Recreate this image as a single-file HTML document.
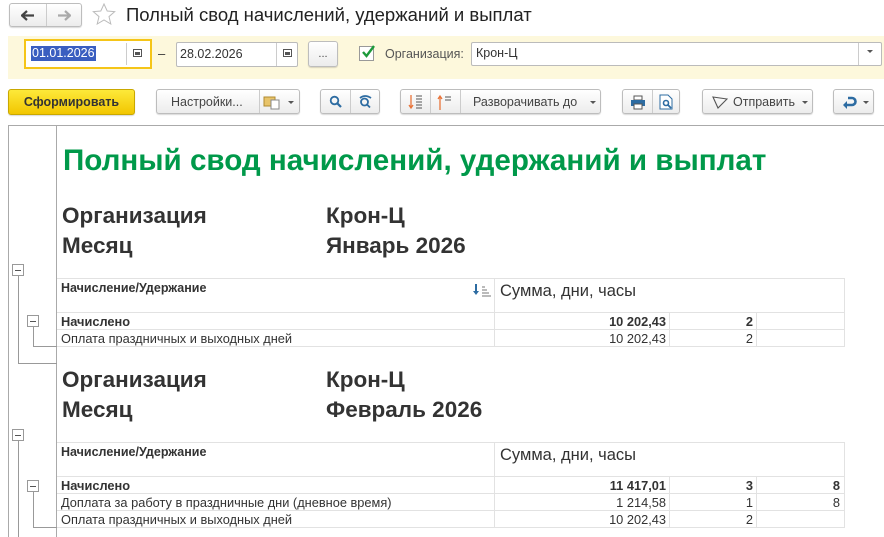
<!DOCTYPE html>
<html><head><meta charset="utf-8"><style>
*{box-sizing:border-box;margin:0;padding:0}
body{width:884px;height:537px;overflow:hidden;background:#fff;font-family:"Liberation Sans",Arial,sans-serif;color:#333;position:relative;font-size:12px}
.a{position:absolute}
.btn{position:absolute;height:25px;border:1px solid #bdbdbd;border-radius:3px;background:linear-gradient(#fff,#ececec);box-shadow:0 1px 1px rgba(0,0,0,.15);font-size:12.5px;color:#444;display:flex;align-items:center}
.sep{position:absolute;top:0;bottom:0;width:1px;background:#ccc}
.caret{width:0;height:0;border-left:3px solid transparent;border-right:3px solid transparent;border-top:3px solid #555;display:inline-block}
.hl{position:absolute;background:#e2e2e2;height:1px}
.vl{position:absolute;background:#e2e2e2;width:1px}
.t{position:absolute;font-size:12.8px;white-space:nowrap}
.b{font-weight:bold}
.r{text-align:right}
.box{position:absolute;width:12px;height:12px;border:1px solid #999;background:#fff}
.box:after{content:"";position:absolute;left:2px;right:2px;top:5px;height:1px;background:#555}
.tl{position:absolute;background:#999}
.big{position:absolute;font-size:22.5px;font-weight:bold;color:#333}
</style></head><body>
<div class="btn" style="left:9px;top:3px;width:73px;height:24px"><div class="sep" style="left:36px"></div>
<svg class="a" style="left:11px;top:6px" width="14" height="11"><path d="M1 5.5h12M6 1L1 5.5 6 10" stroke="#444" stroke-width="2.2" fill="none"/></svg>
<svg class="a" style="left:47px;top:6px" width="14" height="11"><path d="M1 5.5h12M8 1l5 4.5L8 10" stroke="#aaa" stroke-width="2.2" fill="none"/></svg></div>
<svg class="a" style="left:92px;top:3px" width="24" height="22"><path d="M12 1l3.2 7 7.5.6-5.7 5 1.8 7.4L12 17l-6.8 4 1.8-7.4-5.7-5 7.5-.6z" fill="none" stroke="#bbb" stroke-width="1"/></svg>
<div class="a" style="left:126px;top:4px;font-size:18.5px;color:#222">Полный свод начислений, удержаний и выплат</div>
<div class="a" style="left:8px;top:36px;width:876px;height:43px;background:#fdf8dc"></div>
<div class="a" style="left:24px;top:39px;width:128px;height:30px;border:2px solid #f5c518;background:#fff"></div>
<div class="a" style="left:28px;top:43px;width:99px;height:22px;border-right:1px solid #ccc"></div>
<div class="a" style="left:31px;top:46px;background:#3a5ec0;color:#fff;font-size:12.5px;padding:0 1px;line-height:15px">01.01.2026</div>
<svg class="a" style="left:133px;top:48px" width="9" height="9"><rect x=".5" y="1.5" width="8" height="7" fill="none" stroke="#555"/><rect x="2" y="4" width="5" height="3" fill="#555"/></svg>
<div class="a" style="left:158px;top:46px;font-size:13px">–</div>
<div class="a" style="left:176px;top:42px;width:122px;height:25px;border:1px solid #bbb;background:#fff;border-radius:2px"></div>
<div class="a" style="left:276px;top:43px;width:1px;height:23px;background:#ccc"></div>
<div class="a" style="left:180px;top:47px;font-size:12.5px">28.02.2026</div>
<svg class="a" style="left:283px;top:48px" width="9" height="9"><rect x=".5" y="1.5" width="8" height="7" fill="none" stroke="#555"/><rect x="2" y="4" width="5" height="3" fill="#555"/></svg>
<div class="btn" style="left:308px;top:41px;width:30px;height:26px;justify-content:center;font-size:11px">...</div>
<div class="a" style="left:359px;top:46px;width:15px;height:15px;border:1px solid #999;background:#fff"></div>
<svg class="a" style="left:360px;top:44px" width="16" height="16"><path d="M3 8l3.5 4L14 2" stroke="#1d9a3a" stroke-width="2.4" fill="none"/></svg>
<div class="a" style="left:385px;top:47px;font-size:12.5px;color:#555">Организация:</div>
<div class="a" style="left:471px;top:42px;width:411px;height:24px;border:1px solid #bbb;background:#fff;border-radius:2px"></div>
<div class="a" style="left:858px;top:43px;width:1px;height:22px;background:#ccc"></div>
<div class="a" style="left:867px;top:49px;line-height:0"><span class="caret"></span></div>
<div class="a" style="left:476px;top:46px;font-size:12.5px">Крон-Ц</div>
<div class="btn" style="left:8px;top:89px;width:127px;height:26px;background:linear-gradient(#fde93a,#f2c600);border-color:#c9a800;justify-content:center;font-weight:bold;font-size:12.5px;color:#333">Сформировать</div>
<div class="btn" style="left:156px;top:89px;width:144px"><span style="margin-left:14px">Настройки...</span><div class="sep" style="left:102px"></div>
<svg class="a" style="left:106px;top:4px" width="20" height="16"><rect x="1" y="3" width="11" height="9" fill="#e8c46a" stroke="#b08a30"/><rect x="8" y="6" width="8" height="9" fill="#fff" stroke="#888"/></svg><span class="caret a" style="left:131px;top:11px"></span></div>
<div class="btn" style="left:320px;top:89px;width:60px"><div class="sep" style="left:29px"></div>
<svg class="a" style="left:8px;top:5px" width="14" height="14"><circle cx="5.5" cy="5.5" r="3.8" fill="none" stroke="#2d6ca2" stroke-width="1.8"/><path d="M8.3 8.3L12 12" stroke="#2d6ca2" stroke-width="2.2"/></svg>
<svg class="a" style="left:37px;top:4px" width="16" height="15"><circle cx="6.5" cy="8" r="3.5" fill="none" stroke="#2d6ca2" stroke-width="1.8"/><path d="M9 10.5l3 3M2 4q5-4 11 0" stroke="#2d6ca2" stroke-width="1.8" fill="none"/></svg></div>
<div class="btn" style="left:400px;top:89px;width:201px"><div class="sep" style="left:29px"></div><div class="sep" style="left:59px"></div>
<svg class="a" style="left:7px;top:4px" width="16" height="17"><path d="M3 1v13M1 11l2 3 2-3" stroke="#e8743a" stroke-width="1.3" fill="none"/><path d="M8 2h6M8 5h6M8 8h6M8 11h6M8 14h6" stroke="#555"/></svg>
<svg class="a" style="left:36px;top:4px" width="16" height="17"><path d="M3 3v13M1 5l2-3 2 3" stroke="#e8743a" stroke-width="1.3" fill="none"/><path d="M8 3h6M8 6h6" stroke="#555"/></svg>
<span class="a" style="left:72px;top:5px">Разворачивать до</span><span class="caret a" style="left:189px;top:11px"></span></div>
<div class="btn" style="left:622px;top:89px;width:58px"><div class="sep" style="left:29px"></div>
<svg class="a" style="left:7px;top:5px" width="16" height="15"><rect x="4" y="1" width="8" height="4" fill="#fff" stroke="#555"/><rect x="1" y="5" width="14" height="6" fill="#2d6ca2"/><rect x="4" y="9" width="8" height="5" fill="#fff" stroke="#555"/></svg>
<svg class="a" style="left:36px;top:4px" width="15" height="16"><path d="M1 1h8l4 4v10H1z" fill="#fff" stroke="#2d6ca2"/><circle cx="7" cy="9" r="2.5" fill="none" stroke="#2d6ca2" stroke-width="1.6"/><path d="M9 11l3 3" stroke="#2d6ca2" stroke-width="1.8"/></svg></div>
<div class="btn" style="left:702px;top:89px;width:111px"><svg class="a" style="left:9px;top:5px" width="16" height="15"><path d="M1 2l14 2-9 9z" fill="none" stroke="#555" stroke-width="1.1"/></svg><span class="a" style="left:30px;top:5px">Отправить</span><span class="caret a" style="left:99px;top:11px"></span></div>
<div class="btn" style="left:833px;top:89px;width:41px"><svg class="a" style="left:8px;top:5px" width="16" height="14"><path d="M6 3h4a3.5 3.5 0 010 7H3" stroke="#2d6ca2" stroke-width="2.6" fill="none"/><path d="M5 6L1 10l4 4z" fill="#2d6ca2"/></svg><span class="caret a" style="left:29px;top:11px"></span></div>
<div class="a" style="left:8px;top:125px;width:876px;height:1px;background:#aaa"></div>
<div class="a" style="left:8px;top:125px;width:1px;height:412px;background:#aaa"></div>
<div class="a" style="left:56px;top:125px;width:1px;height:412px;background:#aaa"></div>
<div class="a" style="left:63px;top:144px;font-size:29.6px;font-weight:bold;color:#00994a;white-space:nowrap">Полный свод начислений, удержаний и выплат</div>
<div class="big" style="left:62px;top:203px">Организация</div><div class="big" style="left:326px;top:203px">Крон-Ц</div>
<div class="big" style="left:62px;top:233px">Месяц</div><div class="big" style="left:326px;top:233px">Январь 2026</div>
<div class="big" style="left:62px;top:367px">Организация</div><div class="big" style="left:326px;top:367px">Крон-Ц</div>
<div class="big" style="left:62px;top:397px">Месяц</div><div class="big" style="left:326px;top:397px">Февраль 2026</div>
<div class="hl" style="left:57px;top:278px;width:788px"></div>
<div class="hl" style="left:57px;top:312px;width:788px"></div>
<div class="hl" style="left:57px;top:329px;width:788px"></div>
<div class="hl" style="left:57px;top:346px;width:788px"></div>
<div class="vl" style="left:494px;top:278px;height:68px"></div>
<div class="vl" style="left:844px;top:278px;height:68px"></div>
<div class="vl" style="left:669px;top:312px;height:34px"></div>
<div class="vl" style="left:756px;top:312px;height:34px"></div>
<div class="t b" style="left:61px;top:281px;font-size:12.5px">Начисление/Удержание</div>
<svg class="a" style="left:473px;top:283px" width="20" height="14"><path d="M3 1v9" stroke="#2d6ca2" stroke-width="2"/><path d="M0 8l3 4 3-4z" fill="#2d6ca2"/><path d="M9 4h3M9 7h5M9 10h7M9 13h9" stroke="#777"/></svg>
<div class="t" style="left:500px;top:282px;font-size:16.5px">Сумма, дни, часы</div>
<div class="t b" style="left:61px;top:314px">Начислено</div>
<div class="t b r" style="left:494px;top:314px;width:172px">10 202,43</div>
<div class="t b r" style="left:670px;top:314px;width:83px">2</div>
<div class="t" style="left:61px;top:331px">Оплата праздничных и выходных дней</div>
<div class="t r" style="left:494px;top:331px;width:172px">10 202,43</div>
<div class="t r" style="left:670px;top:331px;width:83px">2</div>
<div class="hl" style="left:57px;top:442px;width:788px"></div>
<div class="hl" style="left:57px;top:476px;width:788px"></div>
<div class="hl" style="left:57px;top:493px;width:788px"></div>
<div class="hl" style="left:57px;top:510px;width:788px"></div>
<div class="hl" style="left:57px;top:527px;width:788px"></div>
<div class="vl" style="left:494px;top:442px;height:85px"></div>
<div class="vl" style="left:844px;top:442px;height:85px"></div>
<div class="vl" style="left:669px;top:476px;height:51px"></div>
<div class="vl" style="left:756px;top:476px;height:51px"></div>
<div class="t b" style="left:61px;top:445px;font-size:12.5px">Начисление/Удержание</div>
<div class="t" style="left:500px;top:446px;font-size:16.5px">Сумма, дни, часы</div>
<div class="t b" style="left:61px;top:478px">Начислено</div>
<div class="t b r" style="left:494px;top:478px;width:172px">11 417,01</div>
<div class="t b r" style="left:670px;top:478px;width:83px">3</div>
<div class="t b r" style="left:757px;top:478px;width:83px">8</div>
<div class="t" style="left:61px;top:495px">Доплата за работу в праздничные дни (дневное время)</div>
<div class="t r" style="left:494px;top:495px;width:172px">1 214,58</div>
<div class="t r" style="left:670px;top:495px;width:83px">1</div>
<div class="t r" style="left:757px;top:495px;width:83px">8</div>
<div class="t" style="left:61px;top:512px">Оплата праздничных и выходных дней</div>
<div class="t r" style="left:494px;top:512px;width:172px">10 202,43</div>
<div class="t r" style="left:670px;top:512px;width:83px">2</div>
<div class="tl" style="left:18px;top:276px;width:1px;height:87px"></div>
<div class="tl" style="left:18px;top:363px;width:39px;height:1px"></div>
<div class="tl" style="left:33px;top:327px;width:1px;height:19px"></div>
<div class="tl" style="left:33px;top:346px;width:24px;height:1px"></div>
<div class="box" style="left:12px;top:264px"></div>
<div class="box" style="left:27px;top:315px"></div>
<div class="tl" style="left:18px;top:441px;width:1px;height:96px"></div>
<div class="tl" style="left:33px;top:492px;width:1px;height:35px"></div>
<div class="tl" style="left:33px;top:527px;width:24px;height:1px"></div>
<div class="box" style="left:12px;top:429px"></div>
<div class="box" style="left:27px;top:480px"></div>
</body></html>
